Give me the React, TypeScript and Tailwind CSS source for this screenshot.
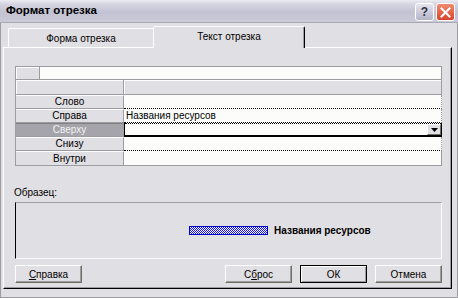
import React from "react";

const face = "bg-[#e0dfe3]";

function Btn({ children, def }: { children: React.ReactNode; def?: boolean }) {
  return (
    <div
      className={
        "w-[67px] h-[18px] flex items-center justify-center text-black " +
        (def
          ? "border border-black shadow-[inset_1px_1px_0_#ffffff,inset_-1px_-1px_0_#9d9da1]"
          : "border-t border-l border-white border-r border-b border-r-[#716f64] border-b-[#716f64] shadow-[inset_-1px_-1px_0_#9d9da1]")
      }
    >
      {children}
    </div>
  );
}

function LabelCell({ text, sel, h = "h-[14px]" }: { text: string; sel?: boolean; h?: string }) {
  return (
    <div
      className={
        "w-[108px] shrink-0 flex items-center justify-center leading-none border-r border-b border-[#9d9da1] " +
        h +
        (sel
          ? " bg-[#a5a4aa] text-[#f2f2f2] border-t border-t-[#808080]"
          : " bg-[#e0dfe3] text-black border-t border-t-white")
      }
    >
      {text}
    </div>
  );
}

export default function App() {
  return (
    <div
      className={
        "w-[458px] h-[298px] flex flex-col overflow-hidden text-[10px] " + face
      }
      style={{ fontFamily: '"Liberation Sans", Arial, sans-serif' }}
    >
      {/* Title bar */}
      <div className="h-[23px] shrink-0 flex items-center justify-between pl-[6px] pr-[3px] bg-[linear-gradient(to_bottom,#ececf2_0%,#d6d6e2_18%,#c2c2d2_55%,#cacad8_100%)] border-b border-[#a8a8b8]">
        <span className="font-bold text-[11.5px] text-black">Формат отрезка</span>
        <div className="flex items-center gap-[2px] pt-[2px]">
          <div className="w-[19px] h-[18px] rounded-[3px] border border-white bg-[linear-gradient(to_bottom,#e4e4ee,#b4b4c8)] flex items-center justify-center text-[#303040] font-bold text-[12px] leading-none">
            ?
          </div>
          <div className="w-[19px] h-[18px] rounded-[3px] border border-white bg-[linear-gradient(to_bottom,#f08a70,#d8442a)] flex items-center justify-center">
            <svg width="11" height="11" viewBox="0 0 11 11">
              <path d="M1.5 1.5 L9.5 9.5 M9.5 1.5 L1.5 9.5" stroke="#ffffff" strokeWidth="2" strokeLinecap="square" />
            </svg>
          </div>
        </div>
      </div>

      {/* Body */}
      <div className="flex-1 flex flex-col pl-[2px] pr-[5px] pb-[8px] border-l border-r border-b border-[#9d9da1]">
        {/* Tabs */}
        <div className="h-[24px] shrink-0 flex items-end pl-[5px]">
          <div className="w-[145px] h-[19px] flex items-center justify-center border-t border-l border-white rounded-tl-[2px] text-black">
            Форма отрезка
          </div>
          <div className="relative z-10 -mb-px w-[152px] h-[22px] flex items-center justify-center border-t border-l border-white border-r border-r-black shadow-[inset_-1px_0_0_#9d9da1] rounded-t-[2px] bg-[#e0dfe3] text-black pb-[2px]">
            Текст отрезка
          </div>
        </div>

        {/* Panel */}
        <div className="flex-1 flex flex-col pl-[11px] pt-[18px] border-t border-l border-white border-r border-b border-r-black border-b-black shadow-[inset_-1px_-1px_0_#9d9da1]">
          {/* Grid */}
          <div className="w-[427px] flex flex-col border-l border-[#9d9da1]">
            {/* row 0 */}
            <div className="h-[14px] flex border-t border-b border-[#9d9da1]">
              <div className="w-[24px] bg-[#e0dfe3] border-r border-[#9d9da1] shadow-[inset_1px_1px_0_#ffffff]" />
              <div className="flex-1 bg-[#fcfdfb] border-r border-[#9d9da1]" />
            </div>
            {/* row 1 header */}
            <div className="h-[15px] flex border-b border-[#9d9da1]">
              <div className="w-[108px] bg-[#e0dfe3] border-r border-[#9d9da1] shadow-[inset_1px_1px_0_#ffffff]" />
              <div className="flex-1 bg-[#e0dfe3] border-r border-[#9d9da1] shadow-[inset_1px_1px_0_#ffffff]" />
            </div>
            {/* Слово */}
            <div className="flex">
              <LabelCell text="Слово" />
              <div className="flex-1 h-[14px] bg-[#fcfdfb] border-b border-dotted border-b-black border-r border-r-[#9d9da1]" />
            </div>
            {/* Справа */}
            <div className="flex">
              <LabelCell text="Справа" />
              <div className="flex-1 h-[14px] bg-[#fcfdfb] border-b border-dotted border-b-black border-r border-r-[#9d9da1] flex items-center pl-[2px] leading-none text-black">
                Названия ресурсов
              </div>
            </div>
            {/* Сверху */}
            <div className="flex">
              <LabelCell text="Сверху" sel />
              <div className="flex-1 h-[14px] bg-[#fcfdfb] border-l border-l-black border-r border-r-black border-b-2 border-b-black flex flex-col">
                <div className="h-px border-t border-dotted border-black" />
                <div className="flex-1 flex justify-end">
                  <div className="w-[14px] h-[11px] bg-[#e0dfe3] border-t border-l border-white border-r border-b border-r-[#716f64] border-b-[#716f64] flex items-center justify-center">
                    <svg width="7" height="4" viewBox="0 0 7 4">
                      <path d="M0 0 H7 L3.5 4 Z" fill="#000000" />
                    </svg>
                  </div>
                </div>
              </div>
            </div>
            {/* Снизу */}
            <div className="flex">
              <LabelCell text="Снизу" />
              <div className="flex-1 h-[14px] bg-[#fcfdfb] border-b border-dotted border-b-black border-r border-r-[#9d9da1]" />
            </div>
            {/* Внутри */}
            <div className="flex">
              <LabelCell text="Внутри" h="h-[15px]" />
              <div className="flex-1 h-[15px] bg-[#fcfdfb] border-b border-[#9d9da1] border-r border-r-[#9d9da1]" />
            </div>
          </div>

          {/* Образец */}
          <div className="h-[13px] mt-[20px] leading-[13px] text-black -ml-px">Образец:</div>
          <div className="w-[427px] h-[57px] mt-[3px] border-t border-t-[#9d9da1] border-l border-l-black border-r border-r-white border-b border-b-white flex items-center pl-[173px]">
            <div className="w-[79px] h-[9px] border border-[#0000cc] bg-[repeating-conic-gradient(#1010ff_0_25%,#ffffff_0_50%)] bg-[length:2px_2px]" />
            <span className="ml-[6px] font-bold text-[10px] text-black">Названия ресурсов</span>
          </div>

          {/* Buttons */}
          <div className="w-[427px] mt-[6px] flex items-center justify-between">
            <Btn>
              <span>
                <span className="underline">С</span>правка
              </span>
            </Btn>
            <div className="flex gap-[8px]">
              <Btn>
                <span>
                  С<span className="underline">б</span>рос
                </span>
              </Btn>
              <Btn def>ОК</Btn>
              <Btn>Отмена</Btn>
            </div>
          </div>
        </div>
      </div>
    </div>
  );
}
